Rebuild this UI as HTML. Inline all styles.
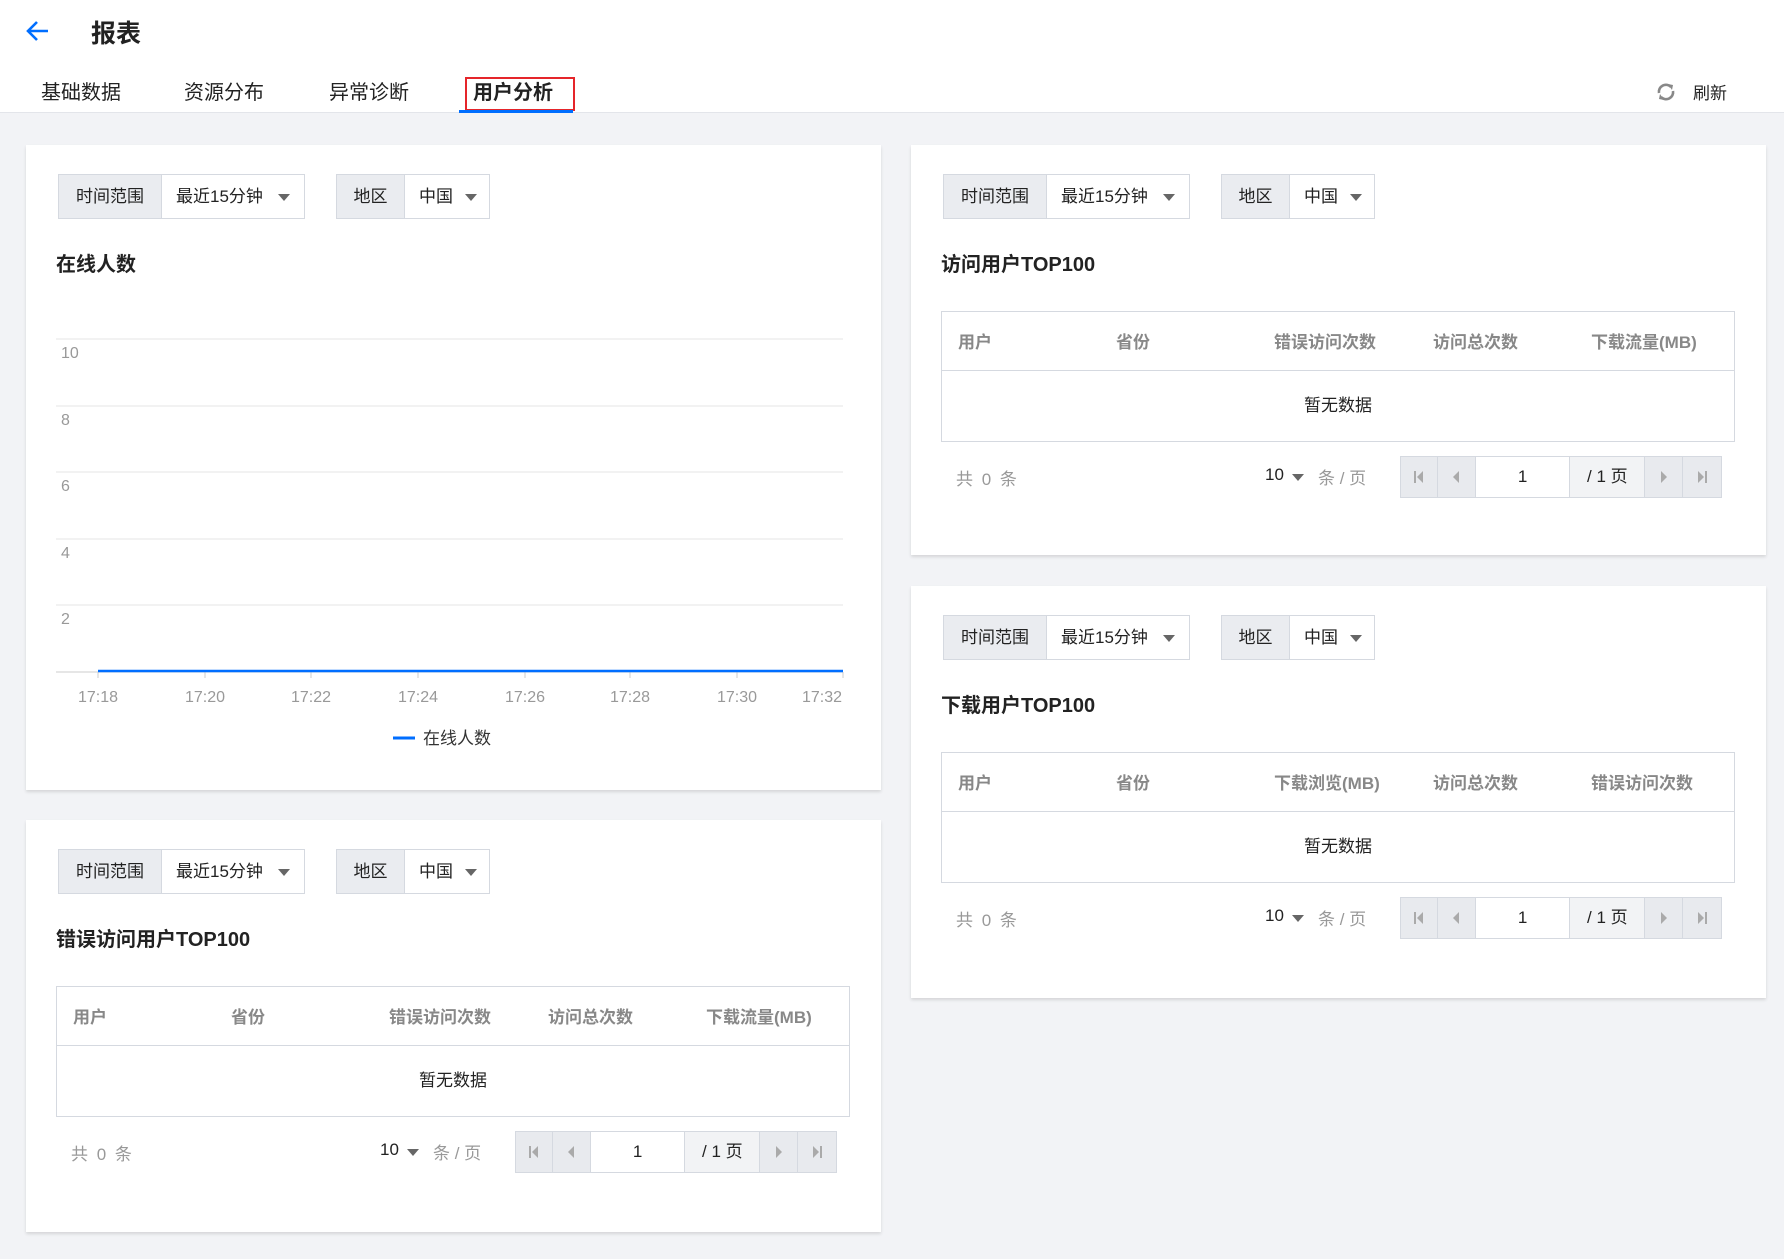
<!DOCTYPE html>
<html><head><meta charset="utf-8">
<style>
*{box-sizing:border-box;margin:0;padding:0}
body{width:1784px;height:1259px;background:#f2f3f6;font-family:"Liberation Sans","Noto Sans CJK SC",sans-serif;color:#222;position:relative;overflow:hidden}
.hd{position:absolute;left:0;top:0;width:1784px;height:113px;background:#fff;border-bottom:1px solid #e3e5ea}
.abs{position:absolute}
.tab{position:absolute;top:80px;font-size:20px;color:#222;line-height:26px}
.card{position:absolute;background:#fff;width:855px;box-shadow:0 2px 3px rgba(0,0,0,.12)}
.flt{position:absolute;top:29px;height:45px;border:1px solid #d5d9e0;display:flex;font-size:17px;line-height:43px}
.flt .l{background:#eaecf0;border-right:1px solid #d5d9e0;text-align:center}
.flt .v{position:relative;padding-left:14px}
.tri{position:absolute;top:19px;width:0;height:0;border-left:6px solid transparent;border-right:6px solid transparent;border-top:7px solid #666}
.ttl{position:absolute;left:30px;top:107px;font-size:20px;font-weight:bold;line-height:26px}
.tbl{position:absolute;left:30px;top:166px;width:794px;height:131px;border:1px solid #d5d9e0}
.th{height:59px;border-bottom:1px solid #d5d9e0;position:relative;font-size:17px;font-weight:bold;color:#888}
.th span{position:absolute;top:16px}
.empty{text-align:center;line-height:70px;font-size:17px}
.pg{position:absolute;top:311px;left:0;width:855px;height:42px;font-size:17px}
.pgbox{position:absolute;left:489px;top:0;height:42px;width:322px;border:1px solid #d5d9e0;display:flex}
.pgbox div{height:40px;border-right:1px solid #d5d9e0;background:#e8eaee;position:relative}
.pgbox div:last-child{border-right:none}
.pgbox svg{position:absolute;left:50%;top:50%;margin:-7px 0 0 -6px}
</style></head><body>
<div class="hd">
<svg class="abs" style="left:26px;top:20px" width="24" height="22" viewBox="0 0 24 22"><path d="M22 11H3M11 2L2 11l9 9" fill="none" stroke="#006eff" stroke-width="2.6"/></svg>
<div class="abs" style="left:91px;top:14px;font-size:25px;font-weight:bold">报表</div>
<div class="tab" style="left:41px">基础数据</div>
<div class="tab" style="left:184px">资源分布</div>
<div class="tab" style="left:329px">异常诊断</div>
<div class="tab" style="left:473px;font-weight:bold">用户分析</div>
<div class="abs" style="left:465px;top:77px;width:110px;height:34px;border:2px solid #e5252a"></div>
<div class="abs" style="left:459px;top:110px;width:114px;height:3px;background:#006eff"></div>
<svg class="abs" style="left:1655px;top:81px" width="22" height="22" viewBox="0 0 22 22"><path d="M4 12A7 7 0 0 1 16 6" fill="none" stroke="#888" stroke-width="2.6"/><path d="M18 10A7 7 0 0 1 6 16" fill="none" stroke="#888" stroke-width="2.6"/><path d="M13 3l5 1-1 5z" fill="#888"/><path d="M9 19l-5-1 1-5z" fill="#888"/></svg>
<div class="abs" style="left:1693px;top:79px;font-size:17px">刷新</div>
</div>

<!-- card 1 chart -->
<div class="card" style="left:26px;top:145px;height:645px">
<div class="flt" style="left:32px;width:247px"><div class="l" style="width:103px">时间范围</div><div class="v" style="width:142px">最近15分钟<i class="tri" style="left:116px"></i></div></div>
<div class="flt" style="left:310px;width:154px"><div class="l" style="width:68px">地区</div><div class="v" style="width:84px">中国<i class="tri" style="left:60px"></i></div></div>
<div class="ttl">在线人数</div>
<svg class="abs" style="left:0;top:0" width="855" height="645">
<g stroke="#e6e6e6" stroke-width="1">
<line x1="30" y1="194" x2="817" y2="194"/><line x1="30" y1="261" x2="817" y2="261"/><line x1="30" y1="327" x2="817" y2="327"/><line x1="30" y1="394" x2="817" y2="394"/><line x1="30" y1="460" x2="817" y2="460"/>
</g>
<line x1="30" y1="527" x2="817" y2="527" stroke="#ccc"/>
<g stroke="#ccc"><line x1="72" y1="527" x2="72" y2="533"/><line x1="179" y1="527" x2="179" y2="533"/><line x1="285" y1="527" x2="285" y2="533"/><line x1="392" y1="527" x2="392" y2="533"/><line x1="499" y1="527" x2="499" y2="533"/><line x1="604" y1="527" x2="604" y2="533"/><line x1="711" y1="527" x2="711" y2="533"/><line x1="817" y1="527" x2="817" y2="533"/></g>
<line x1="72" y1="526" x2="817" y2="526" stroke="#006eff" stroke-width="2.5"/>
<g font-size="16" fill="#999" font-family="Liberation Sans,sans-serif">
<text x="35" y="213">10</text><text x="35" y="280">8</text><text x="35" y="346">6</text><text x="35" y="413">4</text><text x="35" y="479">2</text>
<g text-anchor="middle"><text x="72" y="557">17:18</text><text x="179" y="557">17:20</text><text x="285" y="557">17:22</text><text x="392" y="557">17:24</text><text x="499" y="557">17:26</text><text x="604" y="557">17:28</text><text x="711" y="557">17:30</text><text x="796" y="557">17:32</text></g>
</g>
<line x1="367" y1="593" x2="389" y2="593" stroke="#006eff" stroke-width="3"/>
<text x="397" y="599" font-size="17" fill="#333" font-family="Liberation Sans,Noto Sans CJK SC,sans-serif">在线人数</text>
</svg>
</div>

<div class="card" style="left:26px;top:820px;height:412px">
<div class="flt" style="left:32px;width:247px"><div class="l" style="width:103px">时间范围</div><div class="v" style="width:142px">最近15分钟<i class="tri" style="left:116px"></i></div></div>
<div class="flt" style="left:310px;width:154px"><div class="l" style="width:68px">地区</div><div class="v" style="width:84px">中国<i class="tri" style="left:60px"></i></div></div>
<div class="ttl">错误访问用户TOP100</div>
<div class="tbl"><div class="th"><span style="left:16px">用户</span><span style="left:174px">省份</span><span style="left:332px">错误访问次数</span><span style="left:491px">访问总次数</span><span style="left:649px">下载流量(MB)</span></div><div class="empty">暂无数据</div></div>
<div class="pg"><span class="abs" style="left:45px;top:9px;color:#999;word-spacing:4px">共 0 条</span><span class="abs" style="left:354px;top:9px">10</span><i class="tri" style="left:381px;top:18px"></i><span class="abs" style="left:407px;top:8px;color:#999">条 / 页</span>
<div class="pgbox"><div style="width:37px"><svg width="12" height="14"><rect x="1" y="1" width="2" height="12" fill="#aaa"/><path d="M10 1v12L4 7z" fill="#aaa"/></svg></div><div style="width:38px"><svg width="12" height="14"><path d="M9 1v12L3 7z" fill="#aaa"/></svg></div><div style="width:95px;background:#fff;text-align:center;line-height:40px">1</div><div style="width:75px;background:#f2f3f5;text-align:center;line-height:40px">/ 1 页</div><div style="width:38px"><svg width="12" height="14"><path d="M3 1v12l6-6z" fill="#aaa"/></svg></div><div style="width:38px"><svg width="12" height="14"><path d="M2 1v12l6-6z" fill="#aaa"/><rect x="9" y="1" width="2" height="12" fill="#aaa"/></svg></div></div></div>
</div>

<div class="card" style="left:911px;top:145px;height:410px">
<div class="flt" style="left:32px;width:247px"><div class="l" style="width:103px">时间范围</div><div class="v" style="width:142px">最近15分钟<i class="tri" style="left:116px"></i></div></div>
<div class="flt" style="left:310px;width:154px"><div class="l" style="width:68px">地区</div><div class="v" style="width:84px">中国<i class="tri" style="left:60px"></i></div></div>
<div class="ttl">访问用户TOP100</div>
<div class="tbl"><div class="th"><span style="left:16px">用户</span><span style="left:174px">省份</span><span style="left:332px">错误访问次数</span><span style="left:491px">访问总次数</span><span style="left:649px">下载流量(MB)</span></div><div class="empty">暂无数据</div></div>
<div class="pg"><span class="abs" style="left:45px;top:9px;color:#999;word-spacing:4px">共 0 条</span><span class="abs" style="left:354px;top:9px">10</span><i class="tri" style="left:381px;top:18px"></i><span class="abs" style="left:407px;top:8px;color:#999">条 / 页</span>
<div class="pgbox"><div style="width:37px"><svg width="12" height="14"><rect x="1" y="1" width="2" height="12" fill="#aaa"/><path d="M10 1v12L4 7z" fill="#aaa"/></svg></div><div style="width:38px"><svg width="12" height="14"><path d="M9 1v12L3 7z" fill="#aaa"/></svg></div><div style="width:95px;background:#fff;text-align:center;line-height:40px">1</div><div style="width:75px;background:#f2f3f5;text-align:center;line-height:40px">/ 1 页</div><div style="width:38px"><svg width="12" height="14"><path d="M3 1v12l6-6z" fill="#aaa"/></svg></div><div style="width:38px"><svg width="12" height="14"><path d="M2 1v12l6-6z" fill="#aaa"/><rect x="9" y="1" width="2" height="12" fill="#aaa"/></svg></div></div></div>
</div>

<div class="card" style="left:911px;top:586px;height:412px">
<div class="flt" style="left:32px;width:247px"><div class="l" style="width:103px">时间范围</div><div class="v" style="width:142px">最近15分钟<i class="tri" style="left:116px"></i></div></div>
<div class="flt" style="left:310px;width:154px"><div class="l" style="width:68px">地区</div><div class="v" style="width:84px">中国<i class="tri" style="left:60px"></i></div></div>
<div class="ttl">下载用户TOP100</div>
<div class="tbl"><div class="th"><span style="left:16px">用户</span><span style="left:174px">省份</span><span style="left:332px">下载浏览(MB)</span><span style="left:491px">访问总次数</span><span style="left:649px">错误访问次数</span></div><div class="empty">暂无数据</div></div>
<div class="pg"><span class="abs" style="left:45px;top:9px;color:#999;word-spacing:4px">共 0 条</span><span class="abs" style="left:354px;top:9px">10</span><i class="tri" style="left:381px;top:18px"></i><span class="abs" style="left:407px;top:8px;color:#999">条 / 页</span>
<div class="pgbox"><div style="width:37px"><svg width="12" height="14"><rect x="1" y="1" width="2" height="12" fill="#aaa"/><path d="M10 1v12L4 7z" fill="#aaa"/></svg></div><div style="width:38px"><svg width="12" height="14"><path d="M9 1v12L3 7z" fill="#aaa"/></svg></div><div style="width:95px;background:#fff;text-align:center;line-height:40px">1</div><div style="width:75px;background:#f2f3f5;text-align:center;line-height:40px">/ 1 页</div><div style="width:38px"><svg width="12" height="14"><path d="M3 1v12l6-6z" fill="#aaa"/></svg></div><div style="width:38px"><svg width="12" height="14"><path d="M2 1v12l6-6z" fill="#aaa"/><rect x="9" y="1" width="2" height="12" fill="#aaa"/></svg></div></div></div>
</div>
</body></html>
